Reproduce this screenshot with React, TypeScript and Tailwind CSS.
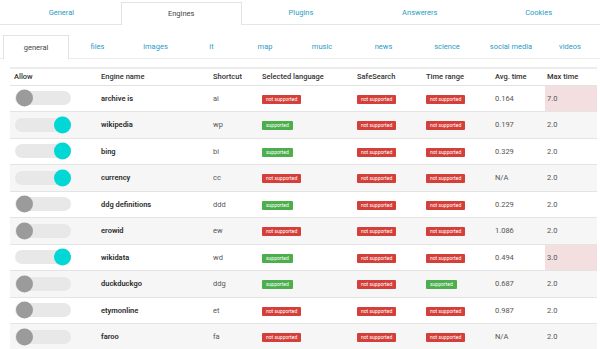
import React from 'react'

type Engine = {
  on: boolean
  name: string
  shortcut: string
  lang: boolean
  safe: boolean
  time: boolean
  avg: string
  max: string
  warn?: boolean
}

const engines: Engine[] = [
  { on: false, name: 'archive is', shortcut: 'ai', lang: false, safe: false, time: false, avg: '0.164', max: '7.0', warn: true },
  { on: true, name: 'wikipedia', shortcut: 'wp', lang: true, safe: false, time: false, avg: '0.197', max: '2.0' },
  { on: true, name: 'bing', shortcut: 'bi', lang: true, safe: false, time: false, avg: '0.329', max: '2.0' },
  { on: true, name: 'currency', shortcut: 'cc', lang: false, safe: false, time: false, avg: 'N/A', max: '2.0' },
  { on: false, name: 'ddg definitions', shortcut: 'ddd', lang: true, safe: false, time: false, avg: '0.229', max: '2.0' },
  { on: false, name: 'erowid', shortcut: 'ew', lang: false, safe: false, time: false, avg: '1.086', max: '2.0' },
  { on: true, name: 'wikidata', shortcut: 'wd', lang: true, safe: false, time: false, avg: '0.494', max: '3.0', warn: true },
  { on: false, name: 'duckduckgo', shortcut: 'ddg', lang: true, safe: false, time: true, avg: '0.687', max: '2.0' },
  { on: false, name: 'etymonline', shortcut: 'et', lang: false, safe: false, time: false, avg: '0.987', max: '2.0' },
  { on: false, name: 'faroo', shortcut: 'fa', lang: false, safe: false, time: false, avg: 'N/A', max: '2.0' },
]

const mainTabs = ['General', 'Engines', 'Plugins', 'Answerers', 'Cookies']

const catTabs = [
  { label: 'general', w: 'w-[66px]' },
  { label: 'files', w: 'w-[57px]' },
  { label: 'images', w: 'w-[59px]' },
  { label: 'it', w: 'w-[53px]' },
  { label: 'map', w: 'w-[54px]' },
  { label: 'music', w: 'w-[60px]' },
  { label: 'news', w: 'w-[63px]' },
  { label: 'science', w: 'w-[64px]' },
  { label: 'social media', w: 'w-[64px]' },
  { label: 'videos', w: 'flex-1' },
]

const Badge = ({ ok }: { ok: boolean }) =>
  ok ? (
    <span className="inline-block bg-[#4cae4c] text-white text-[5px] leading-[9px] px-[4px] rounded-[1px]">supported</span>
  ) : (
    <span className="inline-block bg-[#d43f3a] text-white text-[5px] leading-[9px] px-[4px] rounded-[1px]">not supported</span>
  )

const Toggle = ({ on }: { on: boolean }) => (
  <div className="relative w-[56px] h-[14px] rounded-full bg-[#e8e8e8]">
    <div
      className={`absolute top-1/2 -translate-y-1/2 w-[17px] h-[17px] rounded-full ${
        on ? 'right-0 bg-[#01d7d4]' : 'left-[1px] bg-[#9b9b9b]'
      }`}
    />
  </div>
)

export default function App() {
  return (
    <div className="w-[600px] h-[349px] overflow-hidden bg-white font-['Roboto',sans-serif] text-[#333]">
      {/* Main tabs */}
      <div className="flex px-[2px] pt-[2px] border-b border-[#e6e6e6] h-[25px]">
        {mainTabs.map((t) => (
          <div
            key={t}
            className={`flex-1 flex items-center justify-center text-[7.5px] ${
              t === 'Engines'
                ? 'bg-white border border-b-0 border-[#e3e3e3] -mb-px text-[#444]'
                : 'text-[#2b9bc4]'
            }`}
          >
            {t}
          </div>
        ))}
      </div>

      {/* Category tabs */}
      <div className="flex px-[3px] mt-[10px] border-b border-[#ececec] h-[24px]">
        {catTabs.map((t) => (
          <div
            key={t.label}
            className={`${t.w} flex items-center justify-center text-[7.5px] ${
              t.label === 'general'
                ? 'bg-white border border-b-0 border-[#e3e3e3] -mb-px text-[#444]'
                : 'text-[#2b9bc4]'
            }`}
          >
            {t.label}
          </div>
        ))}
      </div>

      {/* Engines table */}
      <table className="ml-[10px] mt-[8px] w-[587px] border-collapse text-[7.5px] table-fixed">
        <colgroup>
          <col className="w-[91px]" />
          <col className="w-[112px]" />
          <col className="w-[49px]" />
          <col className="w-[95px]" />
          <col className="w-[69px]" />
          <col className="w-[69px]" />
          <col className="w-[50px]" />
          <col />
        </colgroup>
        <thead>
          <tr className="h-[17px] border-t-2 border-[#ececec] border-b border-b-[#e2e2e2] text-left">
            <th className="font-medium pl-[4px]">Allow</th>
            <th className="font-medium">Engine name</th>
            <th className="font-medium">Shortcut</th>
            <th className="font-medium">Selected language</th>
            <th className="font-medium">SafeSearch</th>
            <th className="font-medium">Time range</th>
            <th className="font-medium">Avg. time</th>
            <th className="font-medium pl-[2px]">Max time</th>
          </tr>
        </thead>
        <tbody>
          {engines.map((e, i) => (
            <tr
              key={e.name}
              className={`h-[26.5px] border-b border-[#e4e4e4] ${i % 2 === 1 ? 'bg-[#f6f6f6]' : 'bg-white'}`}
            >
              <td className="pl-[5px]">
                <Toggle on={e.on} />
              </td>
              <td className="font-semibold text-[#2b2b2b]">{e.name}</td>
              <td className="text-[#555]">{e.shortcut}</td>
              <td>
                <Badge ok={e.lang} />
              </td>
              <td>
                <Badge ok={e.safe} />
              </td>
              <td>
                <Badge ok={e.time} />
              </td>
              <td className="text-[#555]">{e.avg}</td>
              <td className={`pl-[2px] text-[#555] ${e.warn ? 'bg-[#f4dfe0]' : ''}`}>{e.max}</td>
            </tr>
          ))}
        </tbody>
      </table>
    </div>
  )
}
